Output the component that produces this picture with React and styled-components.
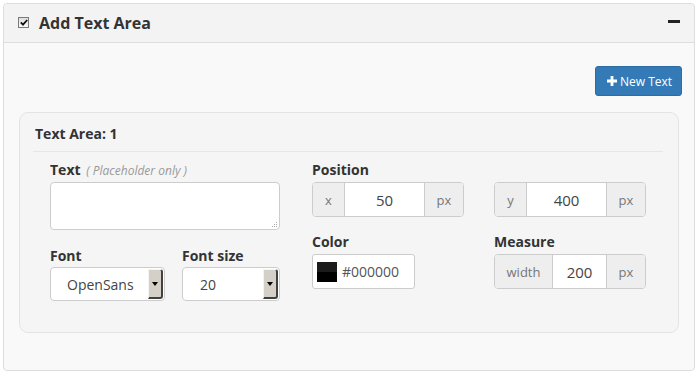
import React from 'react'
import styled, { createGlobalStyle } from 'styled-components'

const GlobalStyle = createGlobalStyle`
  body {
    margin: 0;
    background: #ffffff;
    font-family: "Open Sans", "Liberation Sans", sans-serif;
    color: #333333;
  }
`

const positionFields = [
  { key: 'x', addon: 'x', value: '50' },
  { key: 'y', addon: 'y', value: '400' },
]

const App = () => {
  return (
    <Page>
      <GlobalStyle />
      <Panel>
        <Header>
          <HeaderLeft>
            <CheckBox>
              <svg width="8" height="7" viewBox="0 0 8 7">
                <path d="M0.8 3.4 L3 5.6 L7.2 1" stroke="#111" strokeWidth="1.8" fill="none" />
              </svg>
            </CheckBox>
            <Title>Add Text Area</Title>
          </HeaderLeft>
          <Minus />
        </Header>

        <Body>
          <ButtonRow>
            <NewButton>
              <svg width="10" height="10" viewBox="0 0 10 10">
                <path d="M3.6 0h2.8v3.6H10v2.8H6.4V10H3.6V6.4H0V3.6h3.6z" fill="#fff" />
              </svg>
              New Text
            </NewButton>
          </ButtonRow>

          <Card>
            <CardTitle>Text Area: 1</CardTitle>
            <Rule />
            <Content>
              <LeftCol>
                <Label>
                  Text <Hint>( Placeholder only )</Hint>
                </Label>
                <TextBox>
                  <Grip>
                    <svg width="7" height="7" viewBox="0 0 7 7">
                      <rect x="5" y="1" width="1" height="1" fill="#aaa" />
                      <rect x="3" y="3" width="1" height="1" fill="#aaa" />
                      <rect x="5" y="3" width="1" height="1" fill="#aaa" />
                      <rect x="1" y="5" width="1" height="1" fill="#aaa" />
                      <rect x="3" y="5" width="1" height="1" fill="#aaa" />
                      <rect x="5" y="5" width="1" height="1" fill="#aaa" />
                    </svg>
                  </Grip>
                </TextBox>

                <SelectRow>
                  <Field>
                    <Label>Font</Label>
                    <Select $width={115} $pad={16}>
                      <SelectText>OpenSans</SelectText>
                      <Arrow />
                    </Select>
                  </Field>
                  <Field>
                    <Label>Font size</Label>
                    <Select $width={98} $pad={17}>
                      <SelectText>20</SelectText>
                      <Arrow />
                    </Select>
                  </Field>
                </SelectRow>
              </LeftCol>

              <RightArea>
                <WideLabel>Position</WideLabel>
                {positionFields.map((f) => (
                  <InputGroup key={f.key}>
                    <Addon $width={31}>{f.addon}</Addon>
                    <GroupInput>{f.value}</GroupInput>
                    <Addon $width={38}>px</Addon>
                  </InputGroup>
                ))}

                <Field $top={15}>
                  <Label>Color</Label>
                  <ColorInput>
                    <Swatch />
                    <span>#000000</span>
                  </ColorInput>
                </Field>
                <Field $top={15}>
                  <Label>Measure</Label>
                  <InputGroup>
                    <Addon $width={57}>width</Addon>
                    <GroupInput>200</GroupInput>
                    <Addon $width={38}>px</Addon>
                  </InputGroup>
                </Field>
              </RightArea>
            </Content>
          </Card>
        </Body>
      </Panel>
    </Page>
  )
}

export default App

const Page = styled.div`
  padding: 3px 3px 0 3px;
`

const Panel = styled.div`
  border: 1px solid #dddddd;
  border-radius: 4px;
  background: #f9f9f9;
  overflow: hidden;
`

const Header = styled.div`
  display: flex;
  align-items: center;
  justify-content: space-between;
  height: 38px;
  padding: 0 14px 0 14px;
  background: #f3f3f3;
  border-bottom: 1px solid #dddddd;
`

const HeaderLeft = styled.div`
  display: flex;
  align-items: center;
`

const CheckBox = styled.span`
  display: grid;
  place-items: center;
  box-sizing: border-box;
  width: 11px;
  height: 11px;
  margin-top: -2px;
  border: 1px solid #7a7a7a;
  background: linear-gradient(#dedede, #fbfbfb);
`

const Title = styled.span`
  margin-left: 10px;
  font-size: 16px;
  font-weight: 700;
  color: #333;
  line-height: 20px;
`

const Minus = styled.span`
  width: 12px;
  height: 3px;
  margin-top: -4px;
  background: #222;
`

const Body = styled.div`
  padding: 23px 12px 37px 15px;
`

const ButtonRow = styled.div`
  display: flex;
  justify-content: flex-end;
`

const NewButton = styled.button`
  display: flex;
  align-items: center;
  gap: 3px;
  box-sizing: border-box;
  width: 87px;
  height: 30px;
  padding: 0 0 0 11px;
  border: 1px solid #2e6da4;
  border-radius: 3px;
  background: #337ab7;
  color: #fff;
  font-family: "Open Sans", "Liberation Sans", sans-serif;
  font-size: 12px;
`

const Card = styled.div`
  margin: 16px 3px 0 0;
  padding: 11px 15px 31px 13px;
  border: 1px solid #e3e3e3;
  border-radius: 9px;
  background: #f5f5f5;
`

const CardTitle = styled.div`
  padding-left: 2px;
  font-size: 14px;
  font-weight: 700;
  line-height: 20px;
  color: #333;
`

const Rule = styled.div`
  height: 1px;
  margin-top: 7px;
  background: #e6e6e6;
`

const Content = styled.div`
  display: flex;
  gap: 32px;
  padding: 8px 16px 0 17px;
`

const LeftCol = styled.div`
  width: 230px;
`

const Label = styled.div`
  font-size: 14px;
  font-weight: 700;
  line-height: 20px;
  color: #333;
  margin-bottom: 1px;
`

const WideLabel = styled(Label)`
  grid-column: 1 / -1;
  margin-bottom: 0;
`

const Hint = styled.span`
  margin-left: 2px;
  font-size: 12px;
  font-weight: 400;
  font-style: italic;
  color: #999;
`

const TextBox = styled.div`
  position: relative;
  box-sizing: border-box;
  height: 48px;
  border: 1px solid #cccccc;
  border-radius: 4px;
  background: #fff;
`

const Grip = styled.span`
  position: absolute;
  right: 1px;
  bottom: 1px;
  display: flex;
`

const SelectRow = styled.div`
  display: flex;
  gap: 17px;
  margin-top: 16px;
`

const Field = styled.div`
  margin-top: ${(p) => p.$top || 0}px;
  & > ${Label} {
    margin-bottom: ${(p) => (p.$top ? 2 : 1)}px;
  }
`

const Select = styled.div`
  display: flex;
  align-items: stretch;
  justify-content: space-between;
  box-sizing: border-box;
  width: ${(p) => p.$width}px;
  height: 34px;
  padding: 1px 1px 1px ${(p) => p.$pad}px;
  border: 1px solid #cccccc;
  border-radius: 4px;
  background: #fff;
  font-size: 14px;
  color: #444;
`

const SelectText = styled.span`
  align-self: center;
`

const Arrow = styled.div`
  position: relative;
  box-sizing: border-box;
  width: 15px;
  border-left: 1px solid #f4f4f4;
  border-top: 1px solid #f4f4f4;
  border-right: 2px solid #404040;
  border-bottom: 2px solid #404040;
  border-radius: 0 3px 3px 0;
  background: #d4d0c8;

  &::after {
    content: '';
    position: absolute;
    left: 3px;
    top: 50%;
    margin-top: -2px;
    border-left: 3px solid transparent;
    border-right: 3px solid transparent;
    border-top: 4px solid #000;
  }
`

const RightArea = styled.div`
  display: grid;
  grid-template-columns: 152px 152px;
  column-gap: 30px;
  align-content: start;

  & > div:nth-child(2),
  & > div:nth-child(3) {
    margin-top: 2px;
  }
`

const InputGroup = styled.div`
  display: flex;
  box-sizing: border-box;
  height: 35px;
  border: 1px solid #cccccc;
  border-radius: 4px;
  overflow: hidden;
  background: #fff;
`

const Addon = styled.span`
  display: grid;
  place-items: center;
  width: ${(p) => p.$width}px;
  background: #eeeeee;
  color: #777;
  font-size: 13px;

  &:last-child {
    border-left: 1px solid #cccccc;
  }
  &:first-child {
    border-right: 1px solid #cccccc;
  }
`

const GroupInput = styled.span`
  flex: 1;
  display: grid;
  place-items: center;
  background: #fff;
  color: #444;
  font-size: 15px;
`

const ColorInput = styled.div`
  display: flex;
  align-items: center;
  gap: 5px;
  box-sizing: border-box;
  width: 103px;
  height: 35px;
  padding-left: 4px;
  border: 1px solid #cccccc;
  border-radius: 3px;
  background: #fff;
  color: #555;
  font-size: 14px;
`

const Swatch = styled.span`
  width: 20px;
  height: 20px;
  background: linear-gradient(#1b1b1b 50%, #000 50%);
`
